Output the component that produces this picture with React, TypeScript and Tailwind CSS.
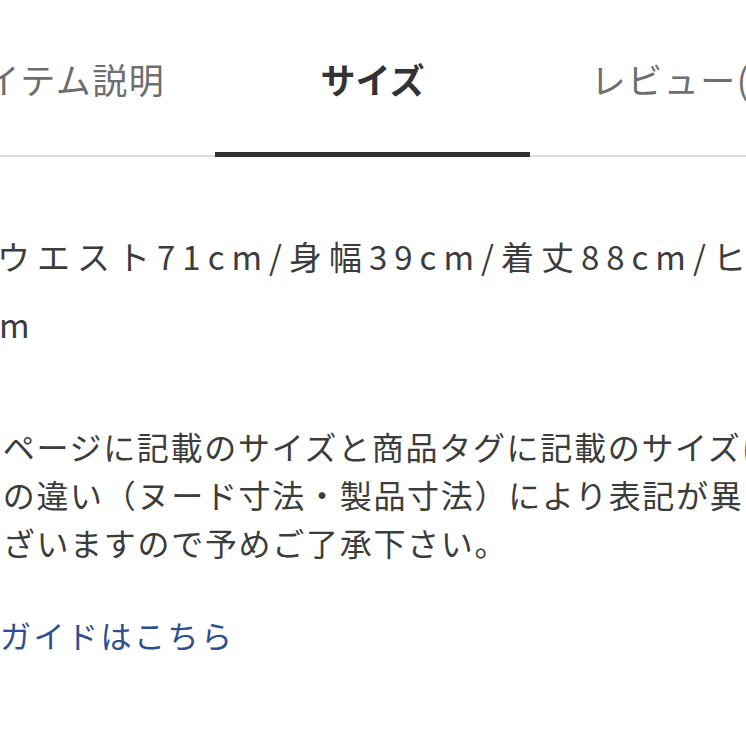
import React from 'react';

const tabs = [
  { label: 'アイテム説明', active: false },
  { label: 'サイズ', active: true },
  { label: 'レビュー(3)', active: false },
];

const App: React.FC = () => {
  return (
    <div className="w-[746px] h-[746px] overflow-hidden bg-white text-[#3c3c3c] font-['Noto_Sans_CJK_JP','Noto_Sans',sans-serif]">
      {/* Tabs */}
      <div className="flex border-b-2 border-[#dddddd] h-[157px] ml-[-100px] w-[945px]">
        {tabs.map((tab) => (
          <div
            key={tab.label}
            className={
              tab.active
                ? 'w-[315px] shrink-0 h-[157px] mb-[-2px] pt-[59px] text-center border-b-[5px] border-[#333333] text-[#333333] font-bold text-[35px] leading-[40px]'
                : 'w-[315px] shrink-0 h-[157px] pt-[59px] text-center text-[#6e6e6e] text-[35px] leading-[40px] tracking-[1.5px] whitespace-nowrap'
            }
          >
            {tab.label}
          </div>
        ))}
      </div>

      {/* Size text */}
      <div className="mt-[65px] text-[33px] leading-[68px] tracking-[7px] whitespace-nowrap">
        <p className="ml-[-3px]">ウエスト71cm/身幅39cm/着丈88cm/ヒップ94cm</p>
        <p className="ml-[-1px]">m</p>
      </div>

      {/* Note */}
      <div className="mt-[64px] ml-[-31px] text-[32px] leading-[48px] tracking-[1.7px] whitespace-nowrap">
        <p>品ページに記載のサイズと商品タグに記載のサイズは、計測方</p>
        <p>法の違い（ヌード寸法・製品寸法）により表記が異なる場合が</p>
        <p>ございますので予めご了承下さい。</p>
      </div>

      {/* Link */}
      <div className="mt-[49px] text-[31px] leading-[40px] tracking-[2.5px] whitespace-nowrap">
        <a href="#" className="text-[#2d4f8e]">ガイドはこちら</a>
      </div>
    </div>
  );
};

export default App;
